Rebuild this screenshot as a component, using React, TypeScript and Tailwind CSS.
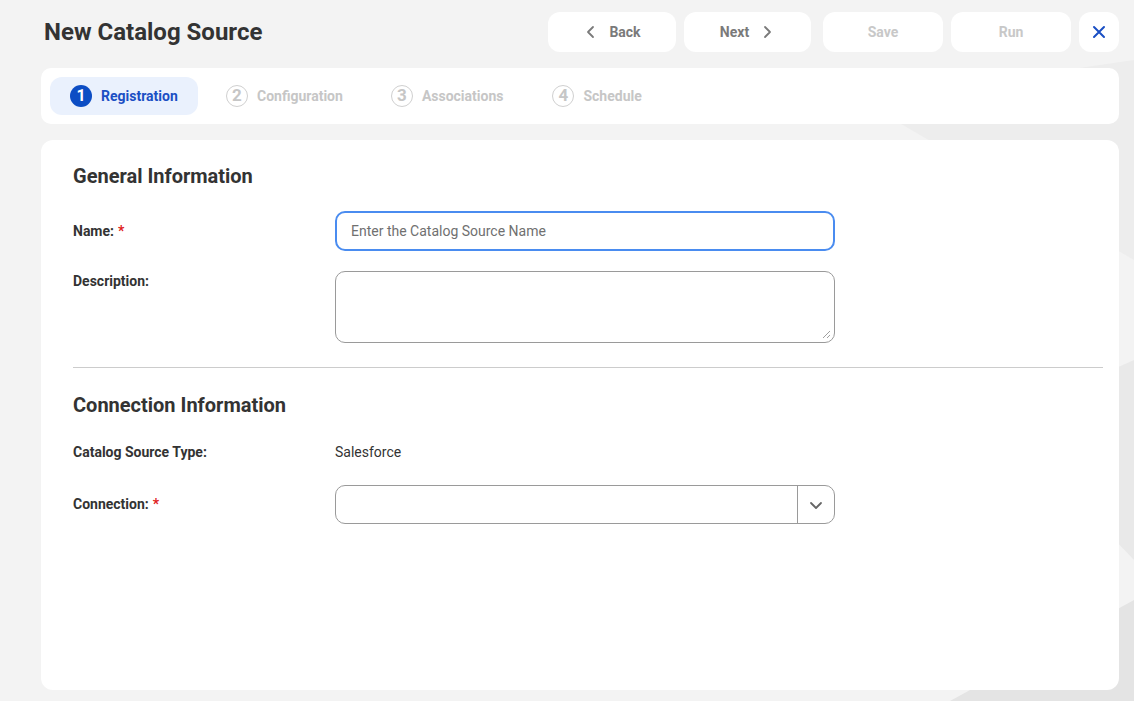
import React from "react";

const font = { fontFamily: "Roboto, 'Liberation Sans', sans-serif" };

const Chevron = ({ dir }: { dir: "left" | "right" | "down" }) => {
  const d =
    dir === "left" ? "M10 3 L5 8 L10 13" : dir === "right" ? "M6 3 L11 8 L6 13" : "M3 6 L8 11 L13 6";
  return (
    <svg width="16" height="16" viewBox="0 0 16 16" fill="none">
      <path d={d} stroke="currentColor" strokeWidth="1.8" strokeLinecap="round" strokeLinejoin="round" />
    </svg>
  );
};

const Step = ({ n, label, active }: { n: number; label: string; active?: boolean }) => {
  if (active) {
    return (
      <div className="flex h-[38px] w-[148px] items-center gap-[9px] rounded-[12px] bg-[#eaf1fd] pl-[20px]">
        <span className="flex h-[22px] w-[22px] items-center justify-center rounded-full bg-[#0c4dc4] text-[16px] font-bold text-white">
          {n}
        </span>
        <span className="text-[14px] font-bold text-[#1b4fc4]">{label}</span>
      </div>
    );
  }
  return (
    <div className="flex h-[38px] items-center gap-[9px]">
      <span className="flex h-[22px] w-[22px] items-center justify-center rounded-full border-[1.5px] border-[#d0d0d0] text-[17px] font-bold text-[#c6c6c6]">
        {n}
      </span>
      <span className="text-[14px] font-bold text-[#c6c6c6]">{label}</span>
    </div>
  );
};

const Row = ({
  label,
  required,
  children,
  className = "",
}: {
  label: string;
  required?: boolean;
  children: React.ReactNode;
  className?: string;
}) => (
  <div className={`flex ${className}`}>
    <div className="w-[262px] shrink-0 text-[14px] font-bold text-[#333]">
      {label}
      {required && <span className="ml-[4px] text-[#e02020]">*</span>}
    </div>
    {children}
  </div>
);

export default function App() {
  return (
    <div className="relative h-[701px] w-[1134px] overflow-hidden bg-[#f3f3f3]" style={font}>
      <svg className="absolute inset-0" width="1134" height="701" viewBox="0 0 1134 701">
        <polygon points="860,100 1134,60 1134,260" fill="#ededed" />
        <polygon points="1000,420 1134,360 1134,560" fill="#e9e9e9" />
        <polygon points="950,701 1134,600 1134,701" fill="#e4e4e4" />
      </svg>

      <div className="relative flex flex-col pl-[41px] pr-[15px] pt-[12px]">
        <div className="flex h-[40px] items-center">
          <h1 className="ml-[3px] flex-1 text-[24px] font-bold text-[#333]">New Catalog Source</h1>
          <button className="flex h-[40px] w-[128px] items-center justify-center gap-[10px] rounded-[12px] bg-white text-[14px] font-bold text-[#7a7a7a]">
            <Chevron dir="left" />
            Back
          </button>
          <button className="ml-[8px] flex h-[40px] w-[127px] items-center justify-center gap-[10px] rounded-[12px] bg-white text-[14px] font-bold text-[#7a7a7a]">
            Next
            <Chevron dir="right" />
          </button>
          <button className="ml-[12px] h-[40px] w-[120px] rounded-[12px] bg-white text-[14px] font-bold text-[#c8c8c8]">
            Save
          </button>
          <button className="ml-[8px] h-[40px] w-[120px] rounded-[12px] bg-white text-[14px] font-bold text-[#c8c8c8]">
            Run
          </button>
          <button className="ml-[8px] flex h-[40px] w-[40px] items-center justify-center rounded-[12px] bg-white text-[#1a4fc4]">
            <svg width="14" height="14" viewBox="0 0 14 14">
              <path d="M2 2 L12 12 M12 2 L2 12" stroke="currentColor" strokeWidth="2" strokeLinecap="round" />
            </svg>
          </button>
        </div>

        <div className="mt-[16px] flex h-[56px] items-center gap-[28px] rounded-[10px] bg-white px-[9px]">
          <Step n={1} label="Registration" active />
          <Step n={2} label="Configuration" />
          <div className="ml-[20px]">
            <Step n={3} label="Associations" />
          </div>
          <div className="ml-[21px]">
            <Step n={4} label="Schedule" />
          </div>
        </div>

        <div className="mt-[16px] h-[550px] rounded-[12px] bg-white pl-[32px] pr-[16px] pt-[21px]">
          <h2 className="text-[20px] font-bold text-[#333]">General Information</h2>

          <Row label="Name:" required className="mt-[20px] items-center">
            <div className="flex h-[40px] w-[500px] items-center rounded-[10px] border-2 border-[#4a8cf0] px-[14px] text-[14px] text-[#707070]">
              Enter the Catalog Source Name
            </div>
          </Row>

          <Row label="Description:" className="mt-[20px] items-start">
            <div className="relative h-[72px] w-[500px] rounded-[10px] border border-[#9a9a9a]">
              <svg className="absolute bottom-[3px] right-[3px]" width="9" height="9" viewBox="0 0 9 9">
                <path d="M1 8 L8 1 M5 8 L8 5" stroke="#a0a0a0" strokeWidth="1" />
              </svg>
            </div>
          </Row>

          <div className="mt-[24px] h-px bg-[#cccccc]" />

          <h2 className="mt-[22px] text-[20px] font-bold text-[#333]">Connection Information</h2>

          <Row label="Catalog Source Type:" className="mt-[22px] items-center">
            <span className="text-[14px] text-[#333]">Salesforce</span>
          </Row>

          <Row label="Connection:" required className="mt-[22px] items-center">
            <div className="flex h-[39px] w-[500px] items-stretch rounded-[10px] border border-[#9a9a9a]">
              <div className="flex-1" />
              <div className="flex w-[37px] items-center justify-center border-l border-[#9a9a9a] text-[#666]">
                <Chevron dir="down" />
              </div>
            </div>
          </Row>
        </div>
      </div>
    </div>
  );
}
